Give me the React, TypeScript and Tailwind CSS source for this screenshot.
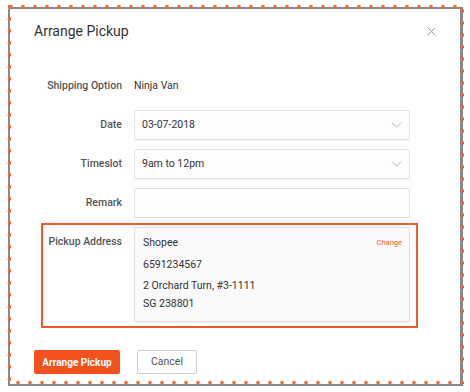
import React from "react";

const rows = [
  { label: "Date", value: "03-07-2018", select: true },
  { label: "Timeslot", value: "9am to 12pm", select: true },
  { label: "Remark", value: "", select: false },
];

function Chevron() {
  return (
    <svg viewBox="0 0 12 7" className="h-[6px] w-[11px]" fill="none" stroke="#a5a5a5" strokeWidth="1">
      <path d="M1 1l5 5 5-5" />
    </svg>
  );
}

export default function App() {
  return (
    <div className="relative h-[392px] w-[470px] overflow-hidden bg-white font-['Roboto','Liberation_Sans',sans-serif]">
      <div className="ml-[8px] mt-[7px] flex h-[379px] w-[455px] flex-col rounded-tl-[3px] border-b-2 border-l-2 border-r-[3px] border-t-2 border-[#8a8a8a]">
        {/* header */}
        <div className="mt-[12px] flex h-[20px] items-center justify-between px-[24px]">
          <span className="text-[14px] text-[#333]">Arrange Pickup</span>
          <svg viewBox="0 0 10 10" className="h-[9px] w-[9px]" stroke="#9a9a9a" strokeWidth="1.1">
            <path d="M1 1l8 8M9 1l-8 8" />
          </svg>
        </div>

        <div className="mt-[30px] flex h-[30px] items-center text-[10.5px]">
          <span className="w-[112px] text-right font-medium text-[#555]">Shipping Option</span>
          <span className="ml-[12px] text-[#333]">Ninja Van</span>
        </div>

        {rows.map((row) => (
          <div key={row.label} className="mt-[9px] flex h-[30px] items-center text-[10.5px]">
            <span className="w-[112px] text-right font-medium text-[#555]">{row.label}</span>
            <div className="ml-[12px] flex h-[30px] w-[276px] items-center justify-between rounded-[2px] border border-[#e2e2e2] bg-[#fdfdfd] px-[7px] text-[#333] shadow-[0_1px_1px_rgba(0,0,0,0.06)]">
              <span>{row.value}</span>
              {row.select && <Chevron />}
            </div>
          </div>
        ))}

        {/* highlighted pickup address */}
        <div className="ml-[31px] mt-[5px] flex h-[105px] w-[377px] border-2 border-[#f05a2b] pt-[2px] text-[10.5px]">
          <span className="w-[79px] pt-[7px] text-right font-medium leading-[16px] text-[#555]">Pickup Address</span>
          <div className="ml-[12px] h-[95px] w-[276px] rounded-[2px] border border-[#e2e2e2] bg-[#fafafa] pl-[8px] pr-[7px] pt-[7px] text-[#333] shadow-[0_1px_1px_rgba(0,0,0,0.06)]">
            <div className="flex h-[16px] items-center justify-between">
              <span>Shopee</span>
              <span className="text-[7.5px] text-[#f05a2b]">Change</span>
            </div>
            <div className="mt-[5px] leading-[18px]">6591234567</div>
            <div className="mt-[3px] leading-[18px]">
              <div>2 Orchard Turn, #3-1111</div>
              <div>SG 238801</div>
            </div>
          </div>
        </div>

        <div className="mt-[22px] flex gap-[17px] pl-[24px]">
          <button className="h-[24px] w-[86px] rounded-[2px] bg-[#f4511e] text-[10px] font-bold text-white">
            Arrange Pickup
          </button>
          <button className="h-[24px] w-[60px] rounded-[2px] border border-[#cfcfcf] bg-white text-[10.5px] text-[#555]">
            Cancel
          </button>
        </div>
      </div>

      {/* dotted selection outline */}
      <svg className="pointer-events-none absolute inset-0" width="470" height="392">
        <rect x="9.5" y="6.5" width="453" height="376" fill="none" stroke="#f26430" strokeWidth="3" strokeDasharray="3 9" />
      </svg>
    </div>
  );
}
